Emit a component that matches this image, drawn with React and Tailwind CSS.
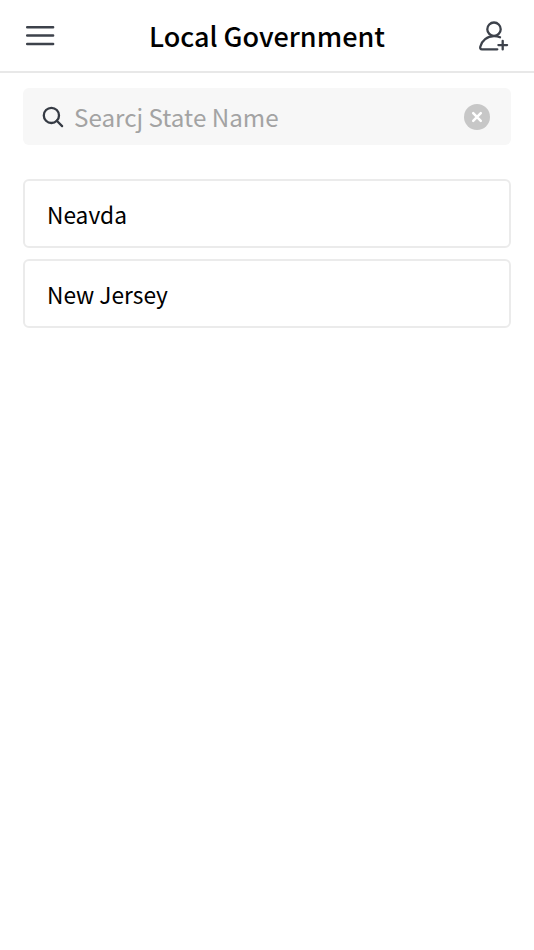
import React, { useState } from "react";

const STATES = ["Neavda", "New Jersey"];

const MenuIcon = () => (
  <svg width="30" height="22" viewBox="0 0 30 22" fill="none" stroke="#3d424b" strokeWidth="2.5" strokeLinecap="round">
    <path d="M2.2 2.2h25.900M2.2 10.600h25.900M2.2 18.900h25.900" />
  </svg>
);

const AddUserIcon = () => (
  <svg width="32" height="32" viewBox="0 0 32 32" fill="none" stroke="#3d424b" strokeWidth="2.3" strokeLinecap="round" strokeLinejoin="round">
    <circle cx="17" cy="9.2" r="6.7" />
    <path d="M20.300 29.300H5c-1.600 0-2.100-1-1.700-2.600C4.800 20.700 10.200 16.200 17 16.200c2.200 0 4.200.300 6 1.100" />
    <path d="M25.700 20.800v8.600M21.400 25.100h8.700" />
  </svg>
);

const SearchIcon = () => (
  <svg width="24" height="24" viewBox="0 0 24 24" fill="none" stroke="#363b44" strokeWidth="2.3" strokeLinecap="round">
    <circle cx="10.400" cy="10.400" r="7.600" />
    <path d="M15.800 15.800l5.300 5.300" />
  </svg>
);

const ClearIcon = () => (
  <svg width="26" height="26" viewBox="0 0 26 26" fill="none">
    <circle cx="13" cy="13" r="13" fill="#c7c7c7" />
    <path d="M9.200 9.200l7.600 7.600M16.800 9.200l-7.600 7.600" stroke="#fff" strokeWidth="2.5" strokeLinecap="round" />
  </svg>
);

const App = () => {
  const [query, setQuery] = useState("");

  return (
    <div className="min-h-screen bg-white font-['Noto_Sans_CJK_SC','Noto_Sans',sans-serif] text-black">
      {/* Header */}
      <header className="flex h-[73px] items-center justify-between border-b-2 border-[#e8e8e8] px-[25px]">
        <button aria-label="Menu">
          <MenuIcon />
        </button>
        <h1 className="pl-0.5 text-[27px] font-medium leading-none">Local Government</h1>
        <button aria-label="Add user">
          <AddUserIcon />
        </button>
      </header>

      <main className="px-[23px] pt-[15px]">
        {/* Search */}
        <div className="flex h-[57px] items-center rounded-md bg-[#f7f7f7] pl-[18px] pr-[21px]">
          <SearchIcon />
          <input
            className="ml-[9px] min-w-0 flex-1 bg-transparent pt-px text-[24.2px] outline-none placeholder:text-[#a3a3a3]"
            placeholder="Searcj State Name"
            value={query}
            onChange={(e) => setQuery(e.target.value)}
          />
          <button aria-label="Clear" onClick={() => setQuery("")}>
            <ClearIcon />
          </button>
        </div>

        {/* Results */}
        <ul className="mt-[34px] flex flex-col gap-[11px]">
          {STATES.map((name) => (
            <li key={name} className="flex h-[69px] items-center rounded-md border-2 border-[#ebebeb] px-[22px] pt-[3px] text-[22.7px]">
              {name}
            </li>
          ))}
        </ul>
      </main>
    </div>
  );
};

export default App;
